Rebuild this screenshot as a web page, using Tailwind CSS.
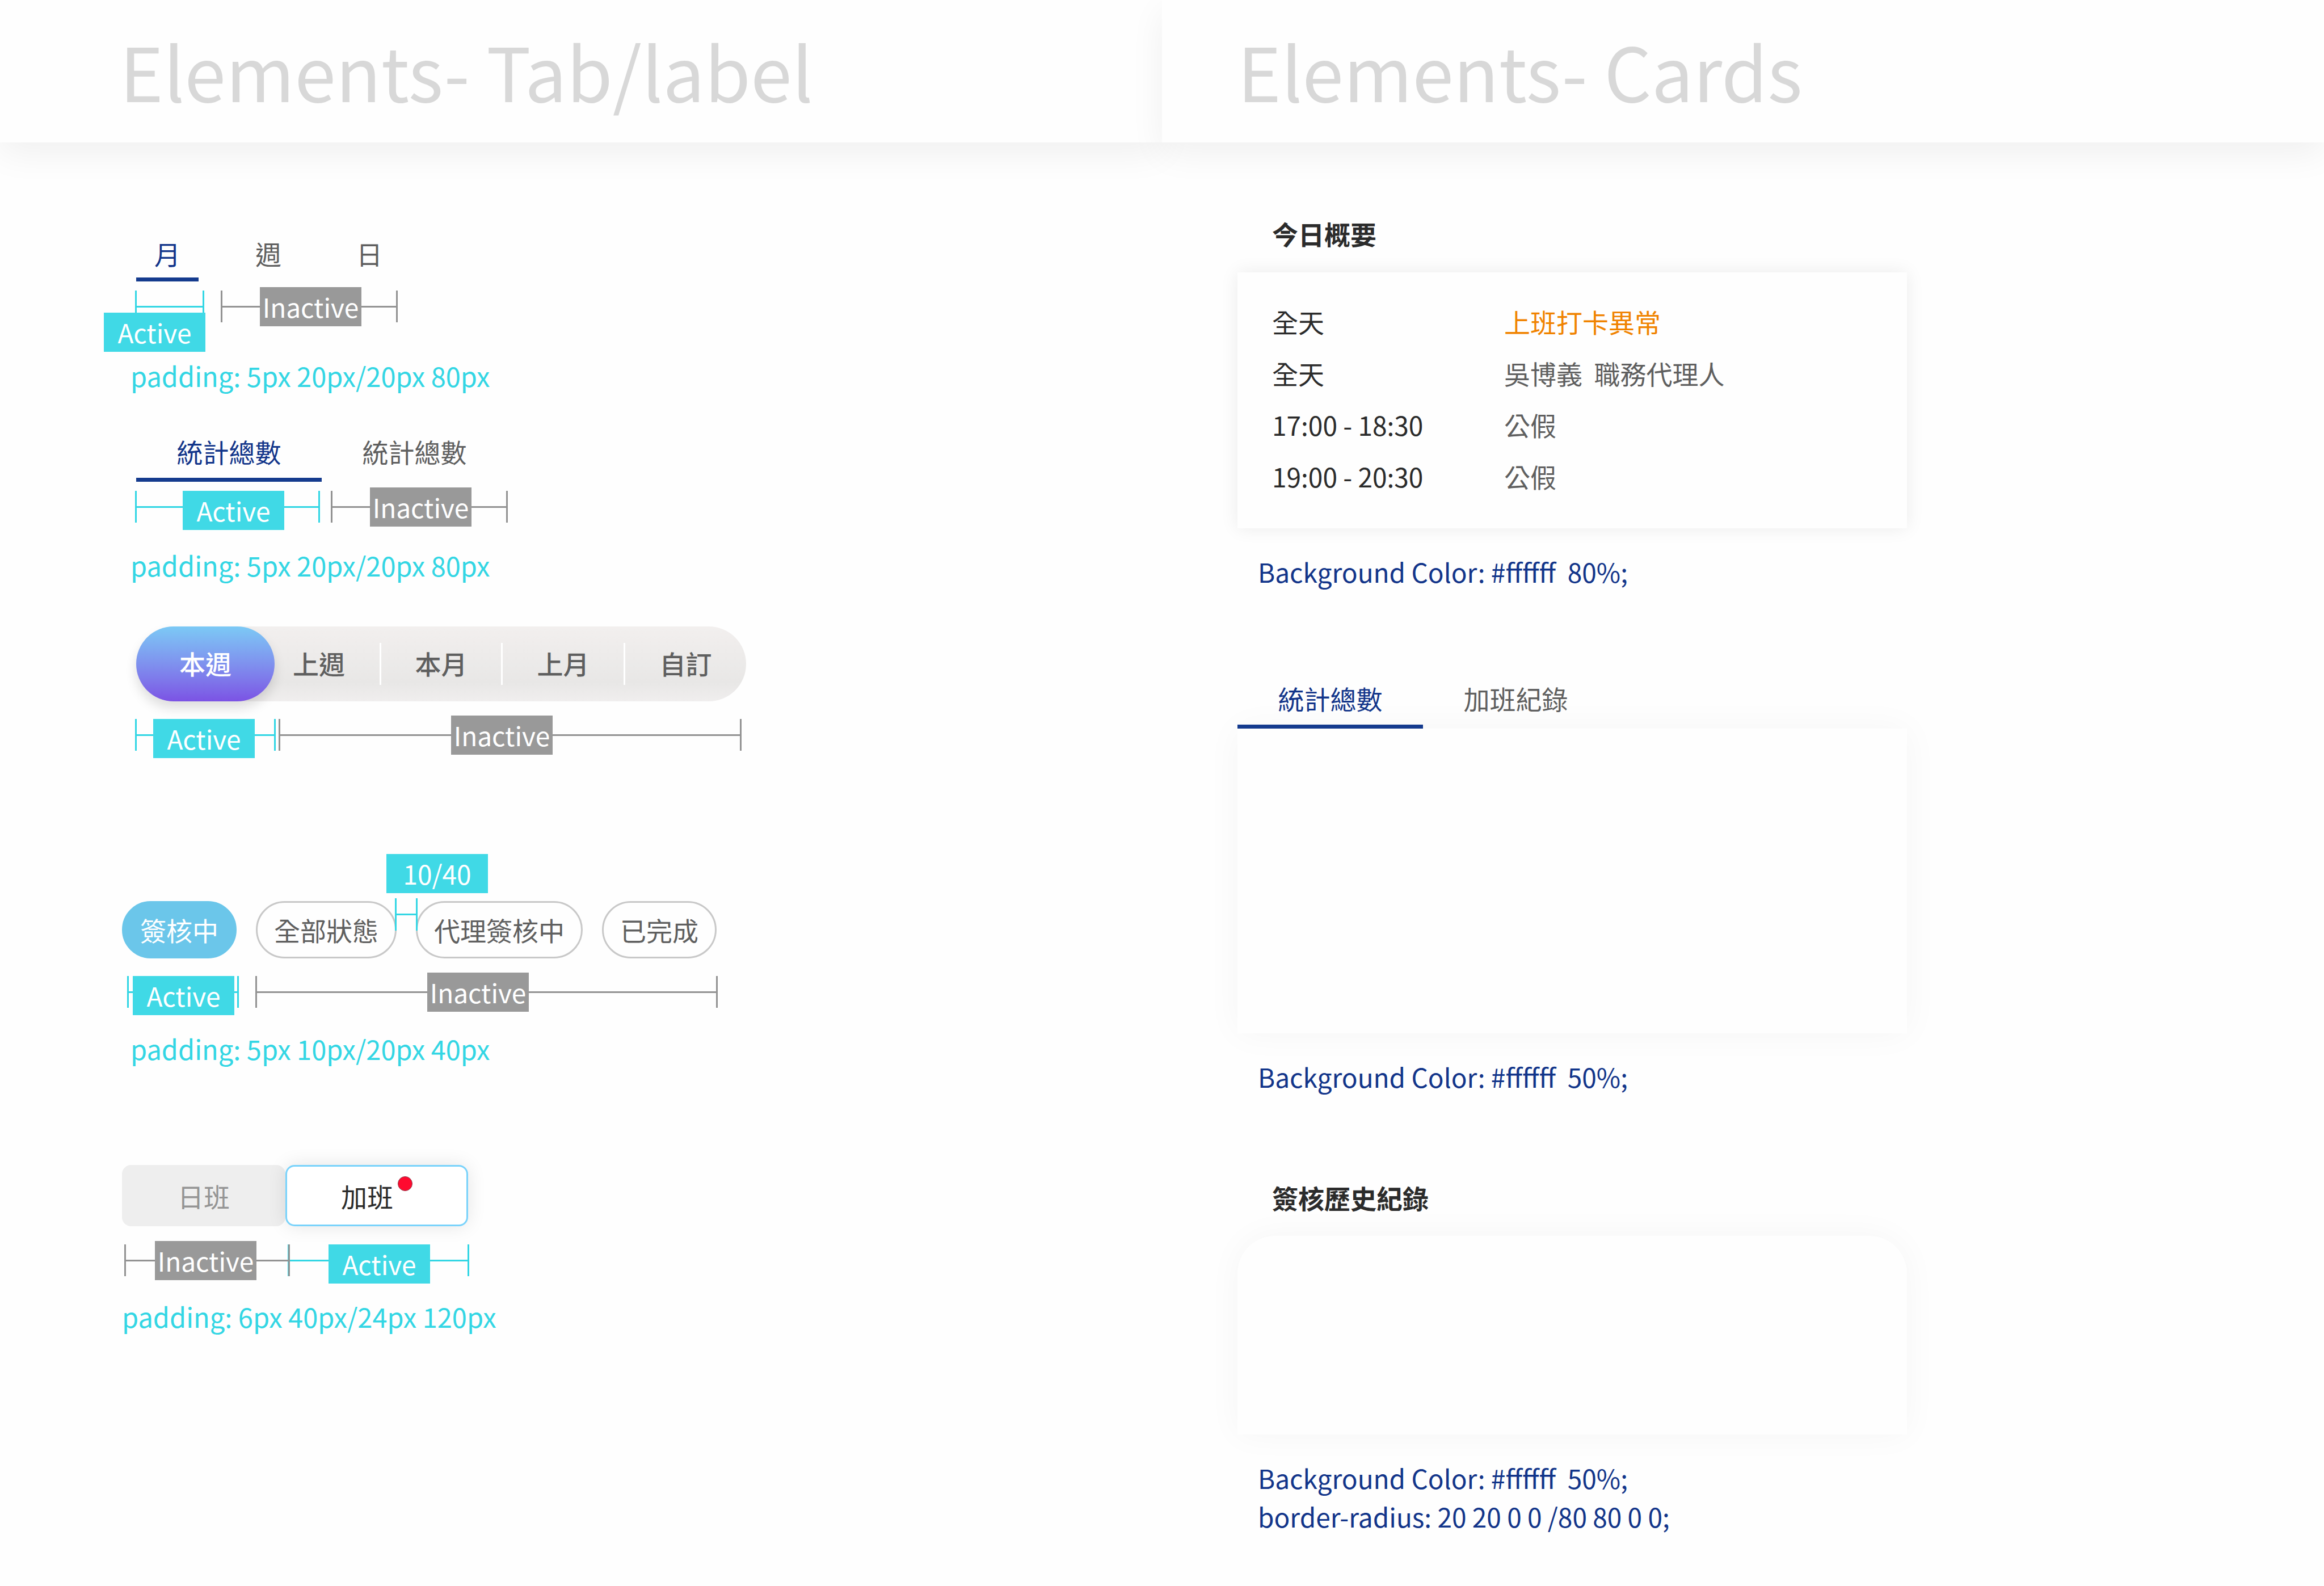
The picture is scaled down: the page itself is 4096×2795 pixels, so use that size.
<!DOCTYPE html>
<html lang="zh-Hant">
<head>
<meta charset="utf-8">
<meta name="viewport" content="width=device-width, initial-scale=1">
<title>Elements</title>
<script src="https://cdn.jsdelivr.net/npm/@tailwindcss/browser@4"></script>
</head>
<body class="min-h-screen bg-[#fefefe] font-['Noto_Sans_CJK_TC',sans-serif] text-[46px] leading-[68px] text-[#2b2b2b]">
<main class="grid min-h-screen grid-cols-2">

  <!-- Tabs and labels -->
  <section class="min-w-0">
    <header class="flex h-[251px] items-center bg-[#fefefe] pb-[6px] pl-[211px] shadow-[0_20px_58px_rgba(0,0,0,0.06)]">
      <h1 class="text-[131px] leading-[190px] text-[#d8d8d8]">Elements- Tab/label</h1>
    </header>

    <div class="flex flex-col items-start pt-[155px] pl-[215px]">
      <!-- Underlined tabs, single character -->
      <div class="ml-[25px] flex gap-[68px] text-[#5f5f5f]">
        <button type="button" class="w-[110px] border-b-7 border-[#153b8e] pb-[3px] leading-[80px] text-[#12358a]">月</button>
        <button type="button" class="w-[110px] border-b-7 border-transparent pb-[3px] leading-[80px]">週</button>
        <button type="button" class="w-[110px] border-b-7 border-transparent pb-[3px] leading-[80px]">日</button>
      </div>
      <div class="mt-4 ml-[23px] flex gap-[29px] text-white">
        <div class="relative flex h-14 w-[122px] items-center border-x-3 border-[#33d6e4]">
          <i class="h-[3px] flex-1 bg-[#33d6e4]"></i>
          <span class="absolute top-[39px] -left-[58px] w-[179px] bg-[#40d9e6] text-center leading-[69px]">Active</span>
        </div>
        <div class="flex h-14 w-[312px] items-center border-x-3 border-[#939393]">
          <i class="h-[3px] w-[66px] bg-[#939393]"></i>
          <span class="w-[179px] shrink-0 bg-[#999999] text-center leading-[69px]">Inactive</span>
          <i class="h-[3px] flex-1 bg-[#939393]"></i>
        </div>
      </div>
      <p class="mt-[60px] ml-[15px] text-[47px] leading-[68px] text-[#33d6e4]">padding: 5px 20px/20px 80px</p>

      <!-- Underlined tabs, words -->
      <div class="mt-[52px] ml-[25px] flex text-[#5f5f5f]">
        <button type="button" class="w-[327px] border-b-7 border-[#153b8e] leading-[94px] text-[#12358a]">統計總數</button>
        <button type="button" class="w-[327px] border-b-7 border-transparent leading-[94px]">統計總數</button>
      </div>
      <div class="mt-4 ml-[23px] flex gap-[19px] text-white">
        <div class="flex h-14 w-[326px] items-center border-x-3 border-[#33d6e4]">
          <i class="h-[3px] w-[81px] bg-[#33d6e4]"></i>
          <span class="w-[179px] shrink-0 self-start bg-[#40d9e6] text-center leading-[69px]">Active</span>
          <i class="h-[3px] flex-1 bg-[#33d6e4]"></i>
        </div>
        <div class="flex h-14 w-[312px] items-center border-x-3 border-[#939393]">
          <i class="h-[3px] w-[66px] bg-[#939393]"></i>
          <span class="w-[179px] shrink-0 bg-[#999999] text-center leading-[69px]">Inactive</span>
          <i class="h-[3px] flex-1 bg-[#939393]"></i>
        </div>
      </div>
      <p class="mt-[41px] ml-[15px] text-[47px] leading-[68px] text-[#33d6e4]">padding: 5px 20px/20px 80px</p>

      <!-- Segmented pill -->
      <div class="mt-[74px] ml-[25px] flex h-[132px] items-center rounded-full bg-linear-to-b from-[#f2efee] via-[#e8e7e6] via-75% to-[#f0eeee] font-medium text-[#5f5f5f]">
        <button type="button" class="relative -mr-[29px] h-full w-[244px] rounded-full bg-linear-to-b from-[#7bc9f5] to-[#7b52e4] pb-1 text-white shadow-[0_12px_20px_rgba(0,0,0,0.13)]">本週</button>
        <button type="button" class="h-[74px] w-[217px] border-r-3 border-white pb-1">上週</button>
        <button type="button" class="h-[74px] w-[214px] border-r-3 border-white pb-1">本月</button>
        <button type="button" class="h-[74px] w-[216px] border-r-3 border-white pb-1">上月</button>
        <button type="button" class="h-[74px] w-[213px] pb-1">自訂</button>
      </div>
      <div class="mt-[31px] ml-[23px] flex gap-[5px] text-white">
        <div class="flex h-14 w-[248px] items-center border-x-3 border-[#33d6e4]">
          <i class="h-[3px] w-[29px] bg-[#33d6e4]"></i>
          <span class="w-[179px] shrink-0 self-start bg-[#40d9e6] text-center leading-[69px]">Active</span>
          <i class="h-[3px] flex-1 bg-[#33d6e4]"></i>
        </div>
        <div class="flex h-14 w-[816px] items-center border-x-3 border-[#939393]">
          <i class="h-[3px] w-[301px] bg-[#939393]"></i>
          <span class="w-[179px] shrink-0 bg-[#999999] text-center leading-[69px]">Inactive</span>
          <i class="h-[3px] flex-1 bg-[#939393]"></i>
        </div>
      </div>

      <!-- Status chips -->
      <span class="mt-[182px] ml-[466px] w-[179px] bg-[#40d9e6] text-center leading-[69px] text-white">10/40</span>
      <div class="relative mt-[14px] flex gap-[34px] text-[#5f5f5f]">
        <button type="button" class="rounded-full border-3 border-[#6bc6ea] bg-[#6bc6ea] px-[29px] leading-[95px] text-white">簽核中</button>
        <button type="button" class="rounded-full border-3 border-[#c8c8c8] px-[29px] leading-[95px]">全部狀態</button>
        <button type="button" class="rounded-full border-3 border-[#c8c8c8] px-[29px] leading-[95px]">代理簽核中</button>
        <button type="button" class="rounded-full border-3 border-[#c8c8c8] px-[29px] leading-[95px]">已完成</button>
        <div class="absolute -top-[5px] left-[481px] flex h-[57px] w-[40px] items-center border-x-3 border-[#33d6e4]">
          <i class="h-[3px] flex-1 bg-[#33d6e4]"></i>
        </div>
      </div>
      <div class="mt-[31px] ml-[9px] flex gap-[29px] text-white">
        <div class="flex h-14 w-[197px] items-center border-x-3 border-[#33d6e4]">
          <i class="h-[3px] w-[7px] bg-[#33d6e4]"></i>
          <span class="w-[179px] shrink-0 self-start bg-[#40d9e6] text-center leading-[69px]">Active</span>
          <i class="h-[3px] flex-1 bg-[#33d6e4]"></i>
        </div>
        <div class="flex h-14 w-[815px] items-center border-x-3 border-[#939393]">
          <i class="h-[3px] w-[300px] bg-[#939393]"></i>
          <span class="w-[179px] shrink-0 bg-[#999999] text-center leading-[69px]">Inactive</span>
          <i class="h-[3px] flex-1 bg-[#939393]"></i>
        </div>
      </div>
      <p class="mt-[38px] ml-[15px] text-[47px] leading-[68px] text-[#33d6e4]">padding: 5px 10px/20px 40px</p>

      <!-- Shift switch -->
      <div class="mt-[171px] flex h-[108px]">
        <button type="button" class="rounded-2xl bg-[#eeeeee] px-[98px] text-[#949494]">日班</button>
        <button type="button" class="flex items-center gap-2 rounded-2xl border-3 border-[#7ad3fb] bg-white px-[95px] shadow-[0_0_33px_rgba(0,0,0,0.1)]">加班<i class="mt-[17px] size-[26px] self-start rounded-full border border-[#8a3a4a] bg-[#ff0a2f]"></i></button>
      </div>
      <div class="mt-8 ml-1 flex text-white">
        <div class="relative flex h-14 w-[292px] items-center border-x-3 border-[#939393]">
          <i class="h-[3px] w-[51px] bg-[#939393]"></i>
          <span class="w-[179px] shrink-0 bg-[#999999] text-center leading-[69px]">Inactive</span>
          <i class="h-[3px] flex-1 bg-[#939393]"></i>
        </div>
        <div class="-ml-1 flex h-14 w-[320px] items-center border-x-3 border-[#33d6e4]">
          <i class="h-[3px] w-[69px] bg-[#33d6e4]"></i>
          <span class="w-[179px] shrink-0 self-start bg-[#40d9e6] text-center leading-[69px]">Active</span>
          <i class="h-[3px] flex-1 bg-[#33d6e4]"></i>
        </div>
      </div>
      <p class="mt-[37px] text-[47px] leading-[68px] text-[#33d6e4]">padding: 6px 40px/24px 120px</p>
    </div>
  </section>

  <!-- Cards -->
  <section class="min-w-0">
    <header class="flex h-[251px] items-center bg-[#fefefe] pb-[6px] pl-[133px] shadow-[0_20px_58px_rgba(0,0,0,0.06)]">
      <h1 class="text-[131px] leading-[190px] text-[#d8d8d8]">Elements- Cards</h1>
    </header>

    <div class="flex max-w-[1313px] flex-col pt-[126px] pl-[133px]">
      <h2 class="pl-[61px] font-bold">今日概要</h2>
      <div class="mt-[35px] bg-[#fefefe] px-[61px] pt-[41px] pb-[46px] shadow-[0_0_30px_rgba(0,0,0,0.08)]">
        <table class="w-full text-left leading-[91px]">
          <tbody>
            <tr><th scope="row" class="w-[409px] font-normal">全天</th><td class="text-[#f08300]">上班打卡異常</td></tr>
            <tr><th scope="row" class="font-normal">全天</th><td class="whitespace-pre text-[#5f5f5f]">吳博義  職務代理人</td></tr>
            <tr><th scope="row" class="font-normal">17:00 - 18:30</th><td class="text-[#5f5f5f]">公假</td></tr>
            <tr><th scope="row" class="font-normal">19:00 - 20:30</th><td class="text-[#5f5f5f]">公假</td></tr>
          </tbody>
        </table>
      </div>
      <p class="mt-[42px] pl-9 whitespace-pre text-[#12358a]">Background Color: #ffffff  80%;</p>

      <div class="relative mt-[142px] flex text-[#5f5f5f]">
        <button type="button" class="w-[327px] border-b-7 border-[#153b8e] leading-[94px] text-[#12358a]">統計總數</button>
        <button type="button" class="w-[327px] border-b-7 border-transparent leading-[94px]">加班紀錄</button>
      </div>
      <div class="h-[537px] bg-[#fefefe] shadow-[0_0_60px_rgba(0,0,0,0.04)]"></div>
      <p class="mt-[42px] pl-9 whitespace-pre text-[#12358a]">Background Color: #ffffff  50%;</p>

      <h2 class="mt-[145px] pl-[61px] font-bold">簽核歷史紀錄</h2>
      <div class="mt-[34px] h-[350px] rounded-t-[66px] bg-[#fefefe] shadow-[0_0_60px_rgba(0,0,0,0.04)]"></div>
      <p class="mt-[42px] pl-9 whitespace-pre text-[#12358a]">Background Color: #ffffff  50%;
border-radius: 20 20 0 0 /80 80 0 0;</p>
    </div>
  </section>

</main>
</body>
</html>
